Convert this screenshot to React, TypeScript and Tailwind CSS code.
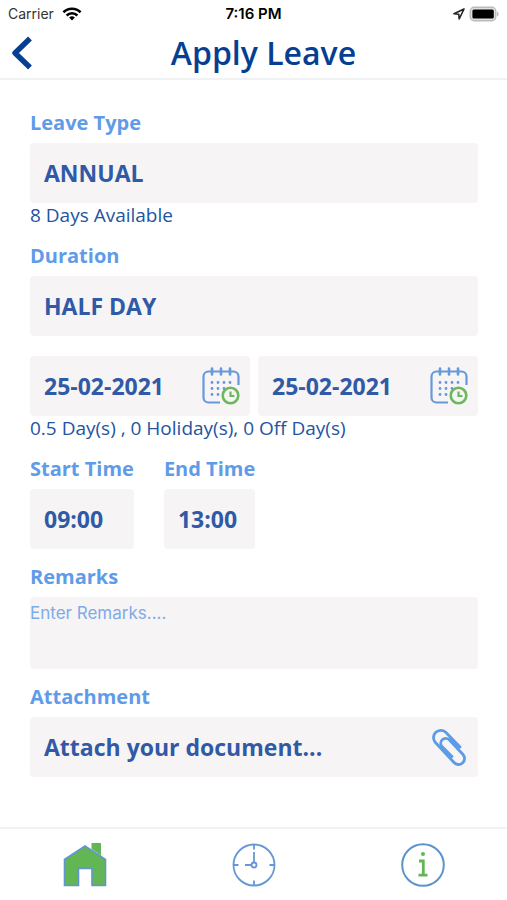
import type { ReactNode } from "react";

const labelClass = "block text-xl leading-6 font-bold text-[#5f9be8]";
const fieldClass =
  "h-[60px] w-full appearance-none rounded-sm bg-[#f6f4f5] px-[14px] text-[23px] font-bold text-[#3059a6] outline-none";

function StatusBar() {
  return (
    <div className="grid h-7 grid-cols-3 items-center px-2 font-['Inter',sans-serif] text-sm text-[#333]">
      <div className="flex items-center gap-2">
        <span>Carrier</span>
        <svg className="h-[14px] w-5" viewBox="0 0 20 14" fill="none" stroke="#000" strokeWidth="2.6">
          <path d="M1.4 5.2a12.3 12.3 0 0 1 17.2 0" />
          <path d="M4.6 8.5a7.7 7.7 0 0 1 10.8 0" />
          <path d="M10 13.6 7.1 10.6a4.1 4.1 0 0 1 5.8 0Z" fill="#000" stroke="none" />
        </svg>
      </div>
      <span className="text-center text-[15px] font-semibold text-black">7:16 PM</span>
      <div className="flex items-center justify-end gap-1">
        <svg className="h-3 w-3" viewBox="0 0 12 12" fill="none" stroke="#222" strokeWidth="1.6" strokeLinejoin="round">
          <path d="M11 1 1 5.8l4.8.5.4 4.7Z" />
        </svg>
        <svg className="h-4 w-[30px]" viewBox="0 0 30 16">
          <rect x="1.2" y="1.2" width="25.6" height="13.6" rx="4" fill="#e0e0e0" stroke="#bbb" strokeWidth="1.4" />
          <rect x="3.4" y="3.4" width="21.4" height="9.2" rx="1.5" fill="#000" />
          <path d="M28 5.6c2.200.8 2.200 4 0 4.800Z" fill="#bbb" />
        </svg>
      </div>
    </div>
  );
}

function CalendarIcon() {
  return (
    <svg className="h-[38px] w-[38px]" viewBox="0 0 38 38" fill="none" strokeLinecap="round">
      <g stroke="#6698dc" strokeWidth="2.2">
        <path d="M18 35.5H6.5a5 5 0 0 1-5-5v-21a5 5 0 0 1 5-5h25a5 5 0 0 1 5 5V18" strokeLinecap="butt" />
        <path d="M10 1.5v6M19 1.5v6M28 1.5v6" strokeWidth="2.6" />
      </g>
      <path
        d="M10 15.5h.01M16 15.5h.01M22 15.5h.01M28 15.5h.01M10 21.5h.01M16 21.5h.01M22 21.5h.01M10 27.5h.01M16 27.5h.01"
        stroke="#6698dc"
        strokeWidth="2.8"
      />
      <circle cx="28.5" cy="28.5" r="7.8" stroke="#6cb85c" strokeWidth="2.6" />
      <path d="M28.5 24.5v4.5h4" stroke="#6cb85c" strokeWidth="2.2" strokeLinecap="butt" />
    </svg>
  );
}

function DateField({ label }: { label: string }) {
  return (
    <div className="flex h-[60px] min-w-0 flex-1 items-center rounded-sm bg-[#f6f4f5] pr-[10px] pl-[14px]">
      <input
        type="text"
        aria-label={label}
        defaultValue="25-02-2021"
        className="min-w-0 flex-1 bg-transparent text-[23px] font-bold text-[#3059a6] outline-none"
      />
      <button type="button" aria-label={`Pick ${label.toLowerCase()}`}>
        <CalendarIcon />
      </button>
    </div>
  );
}

function TimeField({ id, label, value }: { id: string; label: string; value: string }) {
  return (
    <div>
      <label htmlFor={id} className={labelClass}>
        {label}
      </label>
      <select id={id} className={`mt-2 block ${fieldClass}`}>
        <option>{value}</option>
      </select>
    </div>
  );
}

function NavItem({ label, children }: { label: string; children: ReactNode }) {
  return (
    <a href="#" aria-label={label} className="flex flex-1 items-center justify-center">
      {children}
    </a>
  );
}

export default function App() {
  return (
    <div className="flex min-h-screen flex-col bg-white font-['Open_Sans',sans-serif]">
      <StatusBar />

      <header className="grid h-[52px] grid-cols-[44px_1fr_44px] items-center border-b-2 border-[#f1f2f4]">
        <button type="button" aria-label="Back" className="pl-[11px]">
          <svg className="h-[34px] w-[22px]" viewBox="0 0 22 34" fill="none" stroke="#063f92" strokeWidth="5.4">
            <path d="M19 2.5 4 17l15 14.5" strokeLinejoin="round" />
          </svg>
        </button>
        <h1 className="pl-5 text-center text-[32px] leading-10 font-semibold text-[#063f92]">Apply Leave</h1>
      </header>

      <main className="flex-1 pt-[31px] pr-[29px] pb-5 pl-[30px]">
        <form>
          <label htmlFor="leave-type" className={labelClass}>
            Leave Type
          </label>
          <select id="leave-type" className={`mt-2 block ${fieldClass}`}>
            <option>ANNUAL</option>
          </select>
          <p className="text-[19px] leading-6 text-[#24549f]">8 Days Available</p>

          <label htmlFor="duration" className={`mt-[17px] ${labelClass}`}>
            Duration
          </label>
          <select id="duration" className={`mt-2 block ${fieldClass}`}>
            <option>HALF DAY</option>
          </select>

          <div className="mt-5 flex gap-2">
            <DateField label="Start date" />
            <DateField label="End date" />
          </div>
          <p className="text-[19px] leading-6 text-[#24549f]">0.5 Day(s) , 0 Holiday(s), 0 Off Day(s)</p>

          <div className="mt-[17px] flex gap-[30px]">
            <TimeField id="start-time" label="Start Time" value="09:00" />
            <TimeField id="end-time" label="End Time" value="13:00" />
          </div>

          <label htmlFor="remarks" className={`mt-4 ${labelClass}`}>
            Remarks
          </label>
          <textarea
            id="remarks"
            placeholder="Enter Remarks...."
            className="mt-2 block h-[72px] w-full resize-none rounded-sm bg-[#f6f4f5] py-1 font-['Inter',sans-serif] text-[17px] leading-6 text-[#3059a6] outline-none placeholder:text-[#7eabe9]"
          />

          <span id="attachment" className={`mt-4 ${labelClass}`}>
            Attachment
          </span>
          <button
            type="button"
            aria-describedby="attachment"
            className="mt-2 flex h-[60px] w-full items-center justify-between rounded-sm bg-[#f6f4f5] pr-3 pl-[14px] text-[23px] font-bold text-[#3059a6]"
          >
            Attach your document...
            <svg className="h-[38px] w-[34px]" viewBox="0 0 34 38" fill="none" stroke="#5c9be6" strokeWidth="2.8" strokeLinecap="round">
              <path d="M28 19 13.500 4A7.300 7.300 0 0 0 3 14L22 34.500A5.800 5.800 0 0 0 31 26.500L17.500 12A4.700 4.700 0 0 0 10 18.500L20 28.500" />
            </svg>
          </button>
        </form>
      </main>

      <nav className="flex h-[73px] border-t-2 border-[#f1f2f4]">
        <NavItem label="Home">
          <svg className="h-11 w-11" viewBox="0 0 44 44">
            <path d="M28.500 0H38v12.500l-9.500-6.500Z" fill="#63b654" />
            <path
              d="M1.500 16.500 22 3l20.500 13.500v26H29V25.500H15.500v17h-14Z"
              fill="#63b654"
              stroke="#6195ce"
              strokeWidth="1.6"
            />
          </svg>
        </NavItem>
        <NavItem label="Attendance">
          <svg className="h-11 w-11" viewBox="0 0 44 44" fill="none" stroke="#6698d8" strokeWidth="1.8">
            <circle cx="22" cy="22" r="20.500" />
            <path d="M22 1.500v5M22 37.500v5M1.500 22h5M37.500 22h5M22 9v10.500M13 22h6.500" />
            <circle cx="22" cy="22" r="2.500" />
          </svg>
        </NavItem>
        <NavItem label="Information">
          <svg className="h-11 w-11" viewBox="0 0 44 44" fill="none">
            <circle cx="22" cy="22" r="20.800" stroke="#5b94cc" strokeWidth="2" />
            <circle cx="22" cy="11" r="2" fill="#63b654" />
            <path d="M18 18h4.300v14M17.500 32.200h9" stroke="#63b654" strokeWidth="2.800" />
          </svg>
        </NavItem>
      </nav>
    </div>
  );
}
